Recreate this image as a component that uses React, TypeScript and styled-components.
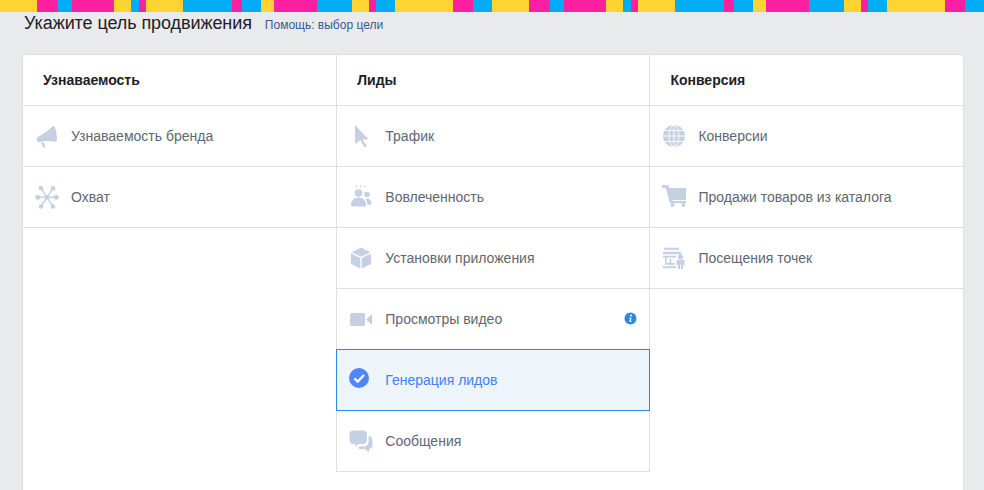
import React from "react";
import styled, { createGlobalStyle } from "styled-components";

const Global = createGlobalStyle`
  html, body { margin: 0; padding: 0; height: 100%; overflow: hidden; background: #e9eaec; }
  body { font-family: "Liberation Sans", Arial, sans-serif; }
`;

const Y = "#ffd332", P = "#fb20a0", B = "#00adf5";
const Page = styled.div`
  height: 490px;
  overflow: hidden;
`;
const Stripe = styled.div`
  height: 12px;
  background-size: 492px 12px;
  background-repeat: repeat-x;
  background-image: linear-gradient(90deg,
    ${Y} 0 37px, ${P} 37px 58px, ${B} 58px 72px, ${P} 72px 114px, ${Y} 114px 131px,
    ${B} 131px 139px, ${P} 139px 146px, ${Y} 146px 183px, ${B} 183px 232px, ${P} 232px 242px,
    ${B} 242px 261px, ${Y} 261px 274px, ${P} 274px 317px, ${B} 317px 352px, ${Y} 352px 369px,
    ${P} 369px 376px, ${B} 376px 395px, ${Y} 395px 453px, ${P} 453px 473px, ${B} 473px 492px);
`;
const Heading = styled.div`
  display: flex;
  align-items: baseline;
  gap: 13px;
  padding: 0 0 0 24px;
  height: 42px;
`;
const Title = styled.h1`
  margin: 0;
  font-size: 18px;
  line-height: 22px;
  font-weight: 400;
  letter-spacing: -0.08px;
  color: #1d2129;
`;
const HelpLink = styled.a`
  font-size: 12px;
  color: #365899;
  text-decoration: none;
`;
const Card = styled.div`
  margin: 0 20px 0 22px;
  height: 500px;
  background: #fff;
  border: 1px solid #dddfe2;
  border-radius: 4px;
  display: grid;
  grid-template-columns: 313px 314px 313px;
  align-items: start;
`;
const Column = styled.div<{ $middle?: boolean; $inset?: number }>`
  --inset: ${(p) => p.$inset ?? 0}px;
  display: flex;
  flex-direction: column;
  ${(p) => p.$middle && `
    border-left: 1px solid #dddfe2;
    border-right: 1px solid #dddfe2;
    border-bottom: 1px solid #dddfe2;
  `}
`;
const ColumnHead = styled.div`
  box-sizing: border-box;
  height: 51px;
  padding-left: calc(20px + var(--inset));
  display: flex;
  align-items: center;
  border-bottom: 1px solid #dddfe2;
  font-size: 14px;
  font-weight: 700;
  color: #1d2129;
`;
const Row = styled.div<{ $selected?: boolean; $last?: boolean }>`
  position: relative;
  box-sizing: border-box;
  height: ${(p) => (p.$last ? "60px" : "61px")};
  padding-left: 12px;
  display: flex;
  align-items: center;
  gap: calc(12px + var(--inset));
  font-size: 14px;
  color: ${(p) => (p.$selected ? "#4080ff" : "#606770")};
  border-bottom: ${(p) => (p.$last ? "none" : "1px solid #dddfe2")};
  ${(p) => p.$selected && `
    background: #edf5fb;
    border: 1px solid #2d88e0;
    height: 62px;
    margin: -1px -1px 0;
  `}
`;
const IconBox = styled.svg`
  width: 24px;
  height: 24px;
  flex: none;
  fill: #c5d0e3;
`;
const InfoBadge = styled.svg`
  position: absolute;
  right: 12px;
  top: 23px;
  width: 13px;
  height: 13px;
`;

const Icon = ({ children }: { children: React.ReactNode }) => (
  <IconBox viewBox="0 0 24 24">{children}</IconBox>
);

const Megaphone = () => (
  <Icon>
    <path d="M17.500 2.600c1-.9 2-.6 2.400.6 1.200 2.800 2 7.800 2.100 13 0 1.200-.7 1.700-1.800 1.500-4-.7-8-.8-11.500-.4l-4.700.9c-1 .2-1.700-.2-1.900-1.100l-.4-2.300c-.1-.9.200-1.400 1-1.800C7 11 13 7 17.500 2.600z" />
    <path d="M5.800 18.800l2.800-.5 1.600 3.900c.3.800 0 1.300-.8 1.400-.7.1-1.200-.2-1.500-.8z" />
  </Icon>
);
const Snow = () => (
  <Icon>
    <g stroke="#c5d0e3" strokeWidth="1.500">
      <path d="M12 12.300L6 3.200M12 12.300L18 3.200M12 12.300L6 21.500M12 12.300L18 21.500M12 12.300H3M12 12.300H21" />
    </g>
    <circle cx="12" cy="12.300" r="2.200" />
    <circle cx="6" cy="3.200" r="2.300" />
    <circle cx="18" cy="3.200" r="2.300" />
    <circle cx="6" cy="21.500" r="2.300" />
    <circle cx="18" cy="21.500" r="2.300" />
    <circle cx="2.800" cy="12.300" r="2.500" />
    <circle cx="21.200" cy="12.300" r="2.500" />
  </Icon>
);
const Cursor = () => (
  <Icon>
    <path d="M6 1l13.500 14.300-6 .1 4.300 6.800-2.500 1-3.800-7L6 20z" />
  </Icon>
);
const People = () => (
  <Icon>
    <circle cx="7.500" cy="1.300" r=".9" /><circle cx="11.500" cy="1.300" r=".9" /><circle cx="15.500" cy="1.300" r=".9" />
    <circle cx="9.500" cy="8" r="3.800" />
    <circle cx="18" cy="9.500" r="2.800" />
    <path d="M2 20c0-4.500 3-7.500 7.500-7.500s7.500 3 7.500 7.500c0 1-.7 1.500-1.500 1.500h-12C2.700 21.500 2 21 2 20z" />
    <path d="M17.500 13.500c3 0 5 2 5 4.800 0 .9-.6 1.400-1.400 1.400h-2.800c0-2.300-.5-4.300-1.700-5.800z" />
  </Icon>
);
const Cube = () => (
  <Icon>
    <path d="M12 1.500l9.300 4.700L12 10.700 2.700 6.200z" />
    <path d="M2 7.500l9.300 4.600v10.500L2 18z" />
    <path d="M22 7.500l-9.300 4.600v10.500L22 18z" />
  </Icon>
);
const Camera = () => (
  <Icon>
    <rect x="1" y="6" width="15" height="13" rx="1.500" />
    <path d="M17 12.500L23 7v11z" />
  </Icon>
);
const Chat = () => (
  <Icon>
    <path d="M4.500 1.500h9.500c2.400 0 4 1.600 4 4v5.500c0 2.400-1.600 4-4 4H9.500l-3 2.800-.2-2.800H4.500C2.100 15 .5 13.400.5 11V5.500C.5 3.100 2.100 1.500 4.500 1.500z" />
    <path d="M19.500 6.800c2.400.3 4 2 4 4.200v5c0 2.200-1.400 3.700-3.300 3.900l-.5 3.300-3.700-3.200h-4.200c-1.200 0-2.200-.4-2.800-1.200l1.200-1.300h4.300c3 0 5-2 5-5z" />
  </Icon>
);
const Globe = () => (
  <Icon>
    <circle cx="12" cy="12" r="11" />
    <g fill="none" stroke="#fff" strokeWidth=".9">
      <ellipse cx="12" cy="12" rx="5" ry="11" />
      <path d="M12 1v22M1 12h22M2.500 6.500h19M2.500 17.500h19" />
    </g>
  </Icon>
);
const Cart = () => (
  <Icon>
    <path d="M0 0h5.200c.8 0 1.300.4 1.500 1.100l.5 1.900H24v10.500c0 .8-.5 1.400-1.300 1.400H10.300l.4 1.100H24v2.300H8.900c-.7 0-1.100-.4-1.300-1L3.800 3H0z" />
    <circle cx="10.500" cy="20" r="1.900" />
    <circle cx="21.500" cy="20" r="1.900" />
  </Icon>
);
const Store = () => (
  <Icon>
    <path d="M2 1.800h15v2H2zM1 5.800h18v2.400H1zM1 9.800h13v1.800H4.500v5.400h3v-4h1.700v4H13v1.800H3v-7.200H1zM1 20.300h13v2H1z" />
    <circle cx="18.500" cy="10.800" r="2.600" />
    <path d="M14.500 15c0-.8.500-1.300 1.300-1.300h5.400c.8 0 1.300.5 1.300 1.300v4h-1.500V23h-2v-4.500h-1V23h-2v-4h-1.500z" />
  </Icon>
);
const Check = () => (
  <Icon>
    <circle cx="10" cy="10" r="10" fill="#4f86f7" />
    <path d="M5.300 10.300l3.400 3.200L15 7" fill="none" stroke="#fff" strokeWidth="2.400" />
  </Icon>
);
const Info = () => (
  <InfoBadge viewBox="0 0 13 13">
    <circle cx="6.500" cy="6.500" r="6" fill="#2d88e0" />
    <circle cx="7" cy="3.600" r="1" fill="#fff" />
    <path d="M5.300 5.700h2.200L6.700 9.300h.8v.7H5.300l.8-3.600h-.8z" fill="#fff" />
  </InfoBadge>
);

export default function App() {
  return (
    <Page>
      <Global />
      <Stripe />
      <Heading>
        <Title>Укажите цель продвижения</Title>
        <HelpLink href="#">Помощь: выбор цели</HelpLink>
      </Heading>
      <Card>
        <Column>
          <ColumnHead>Узнаваемость</ColumnHead>
          <Row><Megaphone />Узнаваемость бренда</Row>
          <Row><Snow />Охват</Row>
        </Column>
        <Column $middle $inset={0.3}>
          <ColumnHead>Лиды</ColumnHead>
          <Row><Cursor />Трафик</Row>
          <Row><People />Вовлеченность</Row>
          <Row><Cube />Установки приложения</Row>
          <Row><Camera />Просмотры видео<Info /></Row>
          <Row $selected><Check />Генерация лидов</Row>
          <Row $last><Chat />Сообщения</Row>
        </Column>
        <Column $inset={0.4}>
          <ColumnHead>Конверсия</ColumnHead>
          <Row><Globe />Конверсии</Row>
          <Row><Cart />Продажи товаров из каталога</Row>
          <Row><Store />Посещения точек</Row>
        </Column>
      </Card>
    </Page>
  );
}
